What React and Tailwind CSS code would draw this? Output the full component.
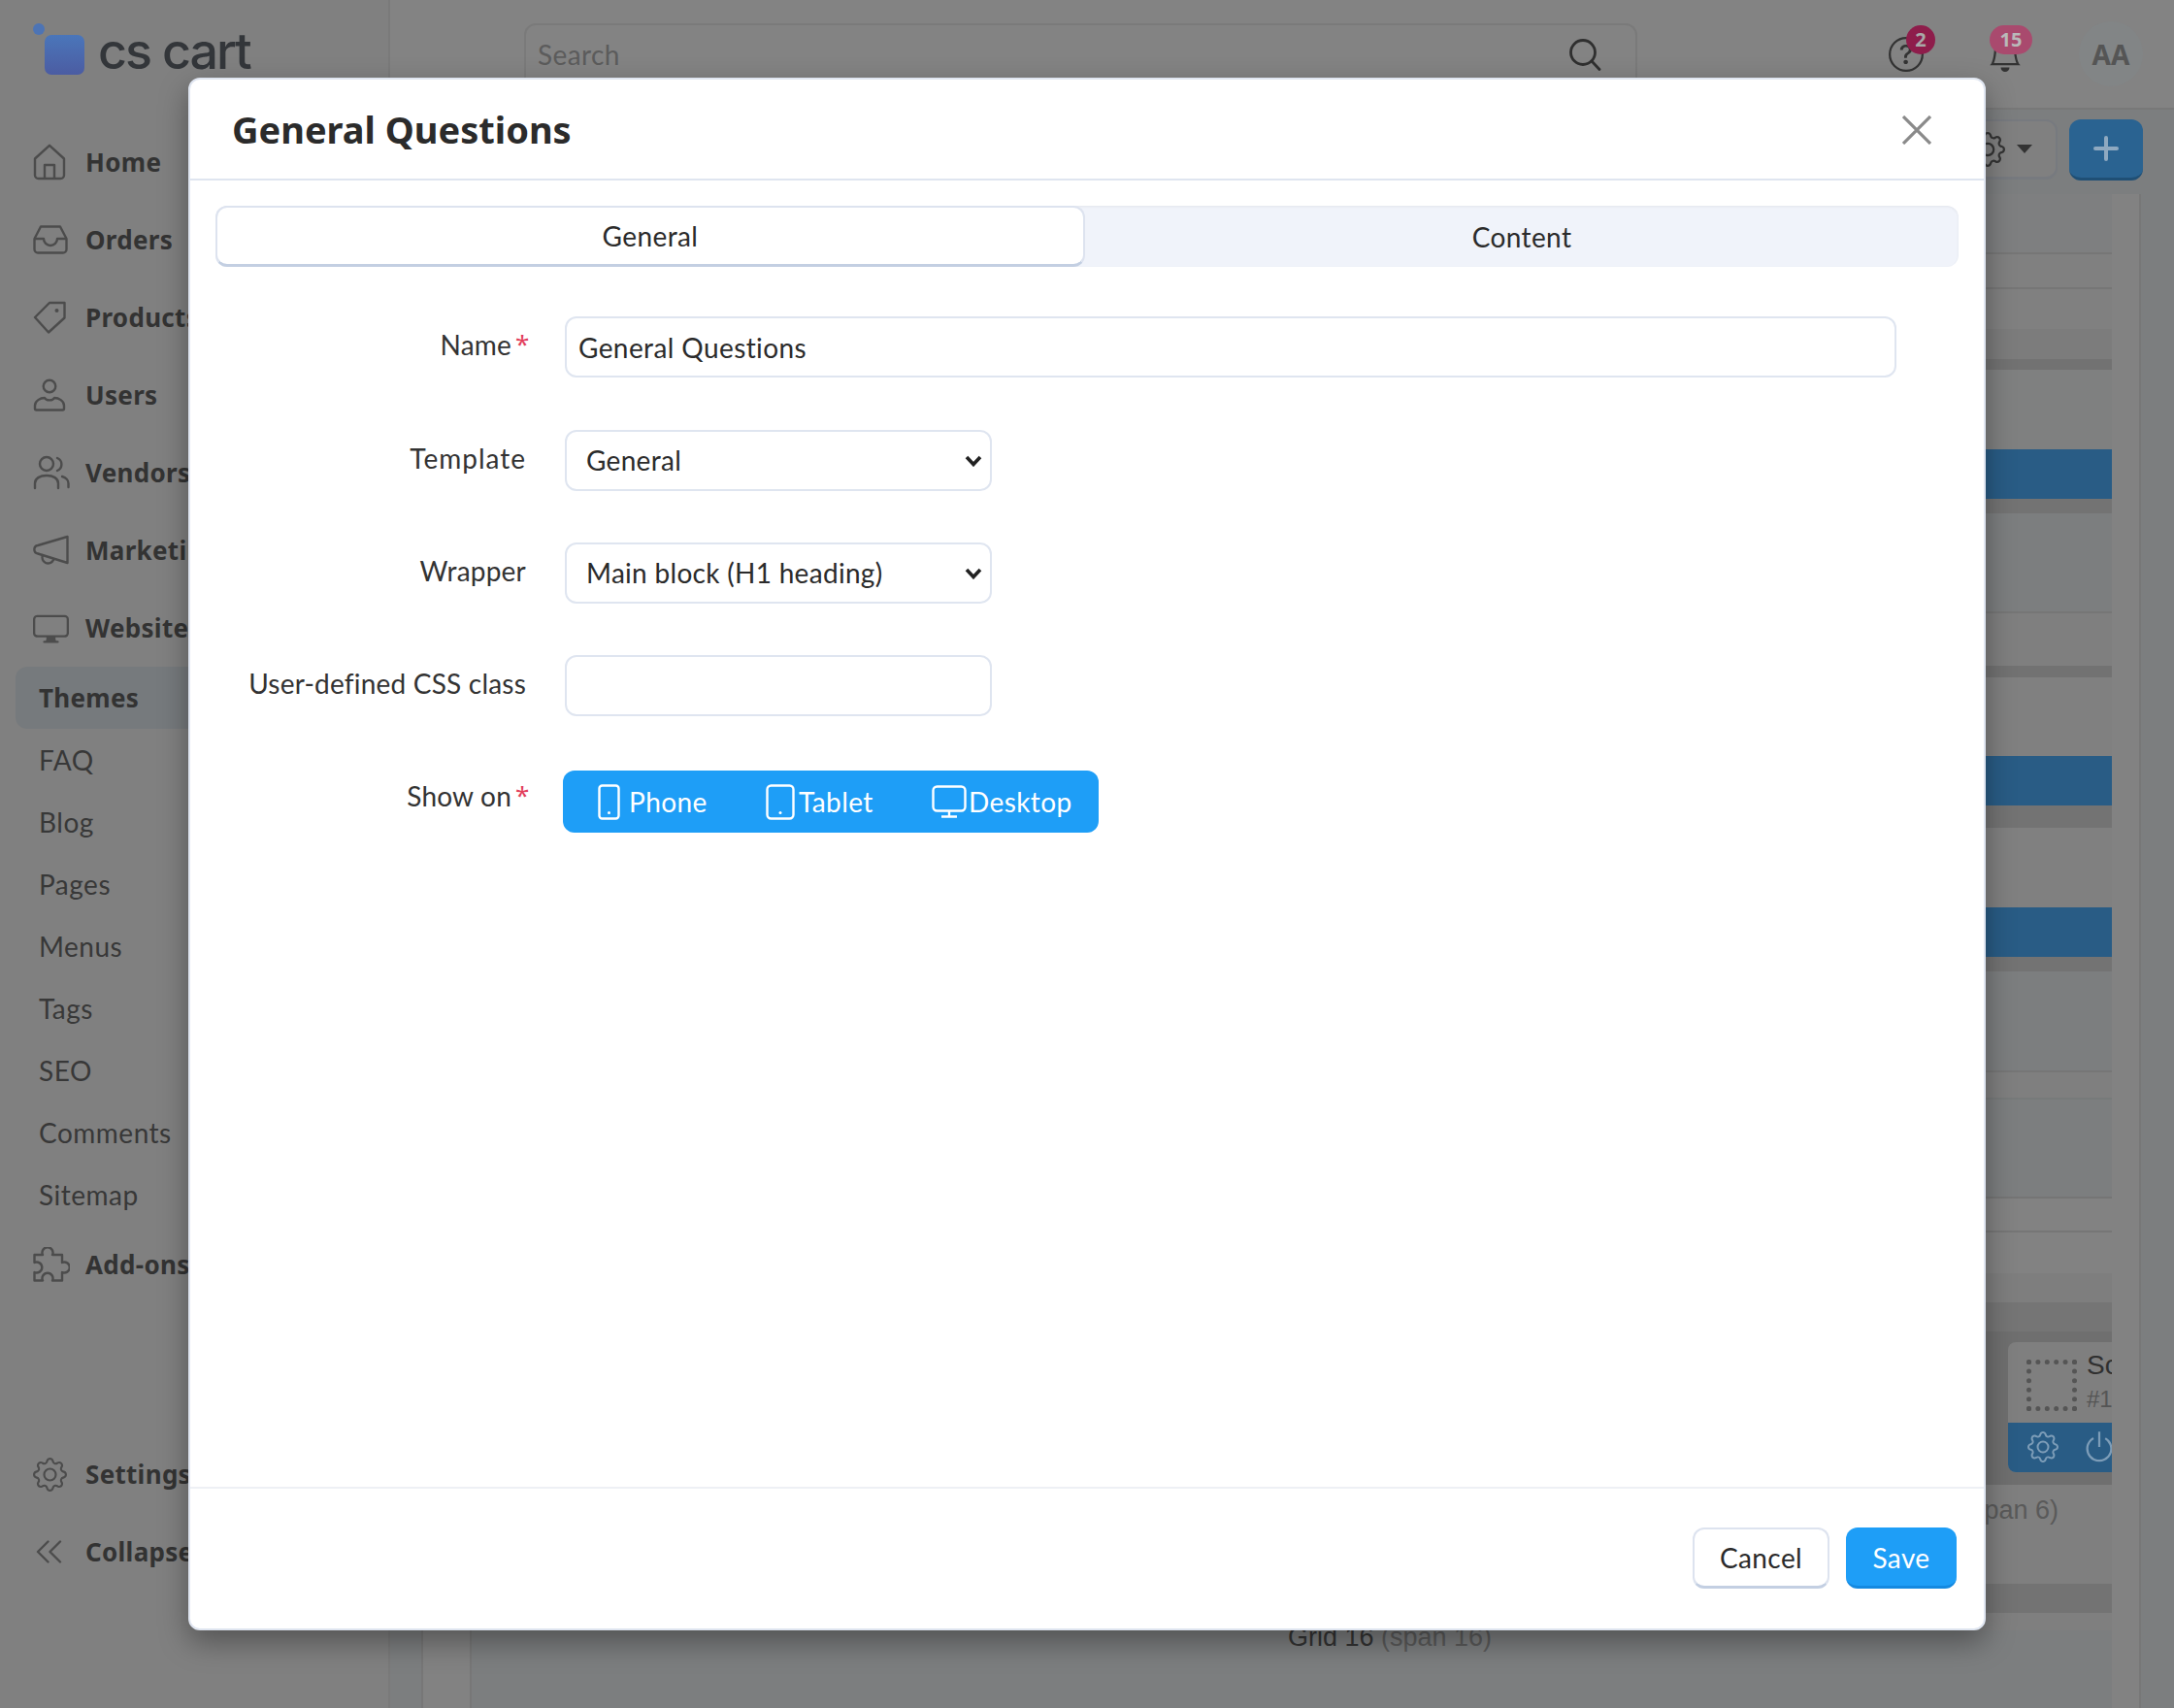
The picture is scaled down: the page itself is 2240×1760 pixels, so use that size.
import React from "react";
import { BsDisplay, BsGear, BsQuestionCircle, BsBell, BsPower } from "react-icons/bs";

const HomeIcon = () => (
  <svg width="34" height="38" viewBox="0 0 34 38" fill="none" stroke="currentColor" strokeWidth="2.4" strokeLinejoin="round">
    <path d="M2 15.5 L17 1.8 L32 15.5 V32.5 a3.5 3.5 0 0 1-3.5 3.5 H5.5 a3.5 3.5 0 0 1-3.5-3.5 Z" />
    <path d="M12 36 V22 h10 V36" />
  </svg>
);
const InboxIcon = () => (
  <svg width="36" height="30" viewBox="0 0 36 30" fill="none" stroke="currentColor" strokeWidth="2.4" strokeLinejoin="round">
    <path d="M8 1.500 H28 L34.500 14 V25 a3.500 3.500 0 0 1-3.500 3.500 H5 a3.500 3.500 0 0 1-3.500-3.500 V14 Z" />
    <path d="M1.500 14 H11 a7 7 0 0 0 14 0 H34.500" />
  </svg>
);
const TagIcon = () => (
  <svg width="34" height="34" viewBox="0 0 34 34" fill="none" stroke="currentColor" strokeWidth="2.4" strokeLinejoin="round">
    <path d="M32.5 2 H17 L2 17 L16 32.5 L32.5 17.5 Z" />
    <circle cx="24.5" cy="10" r="2" fill="currentColor" stroke="none" />
  </svg>
);
const UserIcon = () => (
  <svg width="34" height="34" viewBox="0 0 34 34" fill="none" stroke="currentColor" strokeWidth="2.4" strokeLinejoin="round">
    <circle cx="17" cy="8" r="6.3" />
    <path d="M3.5 32.5 h27 a1.5 1.5 0 0 0 1.5-1.5 v-3 c0-5-5.5-8-10-8 c-1.5 3.2-8.5 3.2-10 0 c-4.500 0-10 3-10 8 v3 a1.500 1.500 0 0 0 1.500 1.500 z" />
  </svg>
);
const PeopleIcon = () => (
  <svg width="38" height="36" viewBox="0 0 38 36" fill="none" stroke="currentColor" strokeWidth="2.4" strokeLinejoin="round" strokeLinecap="round">
    <circle cx="14" cy="9" r="7" />
    <path d="M25 3 a7 7 0 0 1 0 13" />
    <path d="M2 34 v-5 c0-5 5-8 12-8 s12 3 12 8 v5" />
    <path d="M30 22 c4 1 6.500 4 6.500 7 v4" />
  </svg>
);
const MegaIcon = () => (
  <svg width="38" height="32" viewBox="0 0 38 32" fill="none" stroke="currentColor" strokeWidth="2.4" strokeLinejoin="round" strokeLinecap="round">
    <path d="M35.500 2 L5 11 a4.300 4.300 0 0 0 0 8.500 L35.500 29 Z" />
    <path d="M10 21 a6 6 0 0 0 11 5" />
  </svg>
);
const PuzzleIcon = () => (
  <svg width="38" height="36" viewBox="0 0 38 36" fill="none" stroke="currentColor" strokeWidth="2.400" strokeLinejoin="round">
    <path d="M1.500 8 H10 a5.500 5.500 0 1 1 10 0 H30 V16 a5.500 5.500 0 1 1 0 10 V34.500 H20 a5.500 5.500 0 1 0 -10 0 H1.500 V26 a5.500 5.500 0 1 0 0 -10 Z" />
  </svg>
);
const CollapseIcon = () => (
  <svg width="27" height="24" viewBox="0 0 27 24" fill="none" stroke="currentColor" strokeWidth="2.400" strokeLinecap="round" strokeLinejoin="round">
    <path d="M12.500 1.500 L2 12 L12.500 22.500 M25 1.500 L14.500 12 L25 22.500" />
  </svg>
);
const SearchIcon = () => (
  <svg width="34" height="34" viewBox="0 0 34 34" fill="none" stroke="#2f2f2f" strokeWidth="2.800" strokeLinecap="round">
    <circle cx="15" cy="15" r="12.500" />
    <path d="M24.500 24.500 L32 32.500" />
  </svg>
);
const PhoneIcon = () => (
  <svg width="23" height="37" viewBox="0 0 23 37" fill="none" stroke="currentColor" strokeWidth="2.400">
    <rect x="1.500" y="1.500" width="20" height="34" rx="3" />
    <circle cx="11.500" cy="29.500" r="1.500" fill="currentColor" stroke="none" />
  </svg>
);
const TabletIcon = () => (
  <svg width="30" height="37" viewBox="0 0 30 37" fill="none" stroke="currentColor" strokeWidth="2.400">
    <rect x="1.500" y="1.500" width="27" height="34" rx="4" />
    <circle cx="15" cy="29.500" r="1.500" fill="currentColor" stroke="none" />
  </svg>
);
const DesktopIcon = () => (
  <svg width="36" height="34" viewBox="0 0 36 34" fill="none" stroke="currentColor" strokeWidth="2.400">
    <rect x="1.500" y="1.500" width="33" height="25" rx="4" />
    <path d="M18 26 V32 M10 32.500 H26" />
  </svg>
);

function NavItem({ icon, label }) {
  return (
    <div className="flex h-[80px] items-center pl-[34px]">
      <span className="flex w-[54px] text-[#4c4c4c]">{icon}</span>
      <span className="whitespace-nowrap pt-[1px] font-['Noto_Sans',sans-serif] text-[26px] font-bold tracking-[0.3px] text-[#333333]">{label}</span>
    </div>
  );
}

const subItems = ["FAQ", "Blog", "Pages", "Menus", "Tags", "SEO", "Comments", "Sitemap"];

function Sidebar() {
  return (
    <aside className="flex h-[1760px] w-[402px] shrink-0 flex-col border-r-2 border-[#7a7a7a] bg-[#808080]">
      <div className="flex h-[127px] items-start pl-[34px] pt-[24px]">
        <span className="h-[12px] w-[12px] rounded-full bg-[#4d74b5]" />
        <span className="mt-[12px] h-[41px] w-[41px] rounded-[7px] bg-gradient-to-b from-[#4a76ba] to-[#4b5ca2]" />
        <span className="ml-[14px] mt-[-3px] whitespace-nowrap font-['Inter',sans-serif] text-[52px] font-medium leading-[64px] tracking-[-2px] text-[#33363a]">cs cart</span>
      </div>
      <NavItem icon={<HomeIcon />} label="Home" />
      <NavItem icon={<InboxIcon />} label="Orders" />
      <NavItem icon={<TagIcon />} label="Products" />
      <NavItem icon={<UserIcon />} label="Users" />
      <NavItem icon={<PeopleIcon />} label="Vendors" />
      <NavItem icon={<MegaIcon />} label="Marketing" />
      <NavItem icon={<BsDisplay size={37} />} label="Website" />
      <div className="mx-[16px] flex h-[64px] items-center rounded-[12px] bg-[#767a7d] pl-[24px] pt-[1px] font-['Noto_Sans',sans-serif] text-[26px] font-bold tracking-[0.3px] text-[#333333]">Themes</div>
      {subItems.map((s) => (
        <div key={s} className="flex h-[64px] items-center pl-[40px] text-[28px] tracking-[0.5px] text-[#383838]">{s}</div>
      ))}
      <NavItem icon={<PuzzleIcon />} label="Add-ons" />
      <div className="h-[136px]" />
      <NavItem icon={<BsGear size={35} />} label="Settings" />
      <NavItem icon={<span className="ml-[3px]"><CollapseIcon /></span>} label="Collapse" />
    </aside>
  );
}

function TopBar() {
  return (
    <header className="flex h-[113px] items-start border-b-2 border-[#787878] bg-[#838383] pl-[138px]">
      <div className="mt-[24px] flex h-[64px] w-[1147px] items-center justify-between rounded-t-[12px] border-2 border-[#7a7a7a] pl-[12px] pr-[35px]">
        <span className="text-[28px] tracking-[0.4px] text-[#5c5c5c]">Search</span>
        <SearchIcon />
      </div>
      <div className="relative ml-[259px] mt-[38px] text-[#333333]">
        <BsQuestionCircle size={36} />
        <span className="absolute left-[18px] top-[-12px] flex h-[30px] w-[30px] items-center justify-center rounded-full bg-[#8e1d4b] font-['Noto_Sans',sans-serif] text-[20px] font-bold text-[#a8a8a8]">2</span>
      </div>
      <div className="relative ml-[66px] mt-[38px] text-[#333333]">
        <BsBell size={36} />
        <span className="absolute left-[2px] top-[-12px] flex h-[30px] w-[44px] items-center justify-center rounded-full bg-[#a94a6e] font-['Noto_Sans',sans-serif] text-[20px] font-bold text-[#b9b9b9]">15</span>
      </div>
      <div className="ml-[58px] mt-[22px] flex h-[67px] w-[66px] items-center justify-center rounded-full bg-[#828586] font-['Noto_Sans',sans-serif] text-[28px] font-bold text-[#555555]">AA</div>
    </header>
  );
}

function Band({ className, children }) {
  return <div className={className}>{children}</div>;
}

function Panel() {
  return (
    <div className="ml-[32px] mr-[34px] flex flex-1 border-x-2 border-[#777777] bg-[#828282]">
      <div className="w-[50px] shrink-0 border-r-2 border-[#777777]" />
      <div className="flex w-[1690px] shrink-0 flex-col overflow-hidden">
        <Band className="h-[60px] shrink-0 bg-[#7e7f80]" />
        <Band className="h-[36px] shrink-0 border-t-2 border-[#767676] bg-[#808080]" />
        <Band className="h-[43px] shrink-0 border-t-2 border-[#767676] bg-[#808080]" />
        <Band className="h-[31px] shrink-0 bg-[#7c7c7c]" />
        <Band className="h-[11px] shrink-0 bg-[#727272]" />
        <Band className="h-[82px] shrink-0 bg-[#7f8080]" />
        <Band className="h-[51px] shrink-0 bg-[#295c85]" />
        <Band className="h-[15px] shrink-0 bg-[#737373]" />
        <Band className="h-[101px] shrink-0 bg-[#7c7e7f]" />
        <Band className="h-[56px] shrink-0 border-t-2 border-[#767676] bg-[#7f7f7f]" />
        <Band className="h-[12px] shrink-0 bg-[#727272]" />
        <Band className="h-[81px] shrink-0 bg-[#808080]" />
        <Band className="h-[51px] shrink-0 bg-[#295c85]" />
        <Band className="h-[23px] shrink-0 bg-[#737373]" />
        <Band className="h-[82px] shrink-0 bg-[#808080]" />
        <Band className="h-[51px] shrink-0 bg-[#295c85]" />
        <Band className="h-[15px] shrink-0 bg-[#737373]" />
        <Band className="h-[102px] shrink-0 bg-[#7c7e7f]" />
        <Band className="h-[28px] shrink-0 border-t-2 border-[#767676] bg-[#7f7f7f]" />
        <Band className="h-[102px] shrink-0 border-t-2 border-[#777a7a] bg-[#7c7e7f]" />
        <Band className="h-[35px] shrink-0 border-t-2 border-[#757575] bg-[#828282]" />
        <Band className="h-[44px] shrink-0 border-t-2 border-[#767676] bg-[#828282]" />
        <Band className="h-[30px] shrink-0 bg-[#7e7e7e]" />
        <Band className="h-[30px] shrink-0 bg-[#757575]" />
        <Band className="h-[158px] shrink-0 bg-[#6f6f6f] pl-[1583px] pt-[11px]">
          <div className="h-[134px] w-[300px] overflow-hidden rounded-[8px] bg-[#7f7f7f]">
            <div className="flex h-[83px] pl-[19px] pt-[18px]">
              <div className="h-[53px] w-[52px] border-[5px] border-dotted border-[#555555]" />
              <div className="ml-[10px] mt-[-11px] font-['Liberation_Sans',sans-serif] leading-none">
                <div className="text-[28px] leading-[34px] text-[#303030]">Sc</div>
                <div className="text-[24px] leading-[36px] text-[#555555]">#1</div>
              </div>
            </div>
            <div className="flex h-[51px] items-center gap-[24px] bg-[#295c85] pb-[2px] pl-[20px] text-[#7d9db8]">
              <BsGear size={32} />
              <BsPower size={36} />
            </div>
          </div>
        </Band>
        <Band className="flex h-[102px] shrink-0 justify-end bg-[#7f7f7f] pr-[55px] pt-[9px] font-['Liberation_Sans',sans-serif] text-[27px] leading-[34px] text-[#5a5a5a]">Grid 6 (span 6)</Band>
        <Band className="h-[30px] shrink-0 bg-[#737373]" />
        <Band className="h-[18px] shrink-0 bg-[#7f7f7f]" />
        <Band className="h-[80px] shrink-0 bg-[#7c7e7f] pl-[841px] font-['Liberation_Sans',sans-serif] text-[27px] leading-[14px]">
          <span className="whitespace-nowrap text-[#333333]">Grid 16 </span>
          <span className="whitespace-nowrap text-[#5a5a5a]">(span 16)</span>
        </Band>
      </div>
      <div className="flex-1" />
    </div>
  );
}

function Main() {
  return (
    <main className="flex h-[1760px] flex-1 flex-col bg-[#7c7e7f]">
      <TopBar />
      <div className="flex h-[87px] shrink-0 items-start justify-end gap-[12px] pr-[32px] pt-[10px]">
        <div className="flex h-[62px] w-[120px] items-center justify-end gap-[12px] rounded-[12px] border-2 border-b-[3px] border-[#777a7f] bg-[#808080] pr-[24px]">
          <BsGear size={36} className="text-[#333333]" />
          <span className="h-0 w-0 border-x-[8px] border-t-[9px] border-x-transparent border-t-[#333333]" />
        </div>
        <div className="flex h-[63px] w-[76px] items-center justify-center rounded-[12px] border-b-[3px] border-[#1f4f75] bg-[#2a6391]">
          <svg width="26" height="26" viewBox="0 0 26 26" stroke="#8fa9c0" strokeWidth="4" strokeLinecap="round"><path d="M13 2 V24 M2 13 H24" /></svg>
        </div>
      </div>
      <Panel />
    </main>
  );
}

function Label({ text, required, wide, up }) {
  return (
    <div className={`flex w-[320px] shrink-0 justify-end text-[28px] leading-[36px] text-[#333333] ${up ? "pt-[8px]" : "pt-[11px]"} ${wide ? "tracking-[1px]" : "tracking-[0.2px]"}`}>
      <span className="whitespace-nowrap">{text}</span>
      {required ? <span className="ml-[4px] w-[11px] font-['Noto_Sans',sans-serif] text-[26px] leading-[34px] text-[#e23d5b]">*</span> : null}
    </div>
  );
}

function Select({ value }) {
  return (
    <div className="relative h-[63px] w-[440px]">
      <select defaultValue={value} className="h-full w-full appearance-none rounded-[12px] border-2 border-[#dfe5f0] bg-white pb-[2px] pl-[20px] text-[28px] tracking-[0.3px] text-[#2b2b2b] outline-none">
        <option>{value}</option>
      </select>
      <svg className="pointer-events-none absolute right-[10px] top-[26px]" width="18" height="12" viewBox="0 0 18 12" fill="none" stroke="#222222" strokeWidth="3.600"><path d="M2 2 L9 9.500 L16 2" /></svg>
    </div>
  );
}

function Modal() {
  return (
    <div className="absolute left-[194px] top-[80px] z-20 flex h-[1600px] w-[1852px] flex-col rounded-[12px] border-2 border-[#dfe5f0] bg-white font-['Lato',sans-serif] shadow-[0_12px_30px_rgba(0,0,0,0.35)]">
      <div className="flex h-[104px] shrink-0 items-center justify-between border-b-2 border-[#dfe5f0] pl-[43px] pr-[54px]">
        <h1 className="pt-[1px] font-['Noto_Sans',sans-serif] text-[38px] font-bold text-[#2b2b2b]">General Questions</h1>
        <svg className="mt-[2px]" width="30" height="30" viewBox="0 0 30 30" stroke="#8a8a8a" strokeWidth="3.200"><path d="M1 1 L29 29 M29 1 L1 29" /></svg>
      </div>
      <div className="flex-1 px-[26px] pt-[26px]">
        <div className="flex h-[63px] rounded-[12px] bg-[#f0f3fa] text-[28px] tracking-[0.4px] text-[#2b2b2b] shadow-[inset_0_1px_3px_rgba(0,0,0,0.06)]">
          <div className="flex w-[896px] items-center justify-center rounded-[12px] border-2 border-b-[3px] border-[#dde3ef] border-b-[#c3cfe2] bg-white">General</div>
          <div className="flex flex-1 items-center justify-center">Content</div>
        </div>
        <div className="mt-[51px] flex items-start">
          <Label text="Name" required />
          <input readOnly value="General Questions" className="ml-[40px] mr-[64px] h-[63px] flex-1 rounded-[12px] border-2 border-[#dfe5f0] bg-white pl-[12px] text-[28px] tracking-[0.4px] text-[#2b2b2b] outline-none" />
        </div>
        <div className="mt-[54px] flex items-start">
          <Label text="Template" wide />
          <div className="ml-[40px]"><Select value="General" /></div>
        </div>
        <div className="mt-[53px] flex items-start">
          <Label text="Wrapper" />
          <div className="ml-[40px]"><Select value="Main block (H1 heading)" /></div>
        </div>
        <div className="mt-[53px] flex items-start">
          <Label text="User-defined CSS class" />
          <input readOnly className="ml-[40px] h-[63px] w-[440px] rounded-[12px] border-2 border-[#dfe5f0] bg-white outline-none" />
        </div>
        <div className="mt-[56px] flex items-start">
          <Label text="Show on" required up />
          <div className="ml-[38px] flex h-[64px] w-[552px] items-center rounded-[12px] bg-[#1e9ef7] pl-[36px] text-[28px] tracking-[0.4px] text-white">
            <PhoneIcon />
            <span className="ml-[9px] w-[141px]">Phone</span>
            <TabletIcon />
            <span className="ml-[4px] w-[137px]">Tablet</span>
            <DesktopIcon />
            <span className="ml-[2px]">Desktop</span>
          </div>
        </div>
      </div>
      <div className="flex h-[146px] shrink-0 items-start justify-end gap-[17px] border-t-2 border-[#eef0f5] pr-[28px] pt-[40px] text-[28px] tracking-[0.4px]">
        <button className="h-[63px] w-[141px] rounded-[12px] border-2 border-b-[3px] border-[#dde3ef] border-b-[#c3cfe2] bg-white text-[#2b2b2b]">Cancel</button>
        <button className="h-[63px] w-[114px] rounded-[12px] border-b-[3px] border-[#1489e0] bg-[#1e9ef7] pt-[2px] text-white">Save</button>
      </div>
    </div>
  );
}

export default function App() {
  return (
    <div className="relative flex h-[1760px] w-[2240px] overflow-hidden font-['Lato',sans-serif]">
      <Sidebar />
      <Main />
      <Modal />
    </div>
  );
}
